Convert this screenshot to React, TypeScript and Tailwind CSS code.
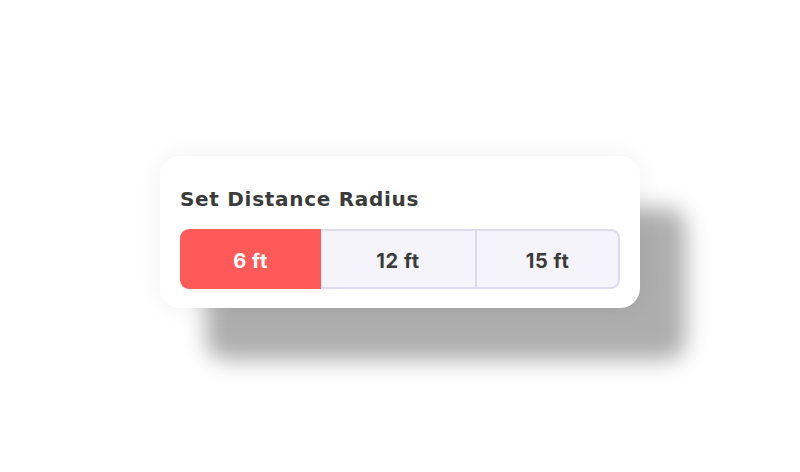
export default function App() {
  return (
    <div className="flex h-[472px] w-full items-center justify-center bg-white pb-2 font-['Inter',sans-serif]">
      {/* card */}
      <div className="w-[480px] rounded-[20px] bg-white px-5 pt-[29px] pb-[19px] shadow-[46px_52px_22px_rgba(0,0,0,0.32),0_0_24px_rgba(0,0,0,0.06)]">
        <h2 className="mb-4 font-['DejaVu_Sans',sans-serif] text-[20px] leading-7 font-bold tracking-[0.7px] text-[#3b3b3b]">
          Set Distance Radius
        </h2>
        <div className="flex h-[60px] text-[20px] font-bold tracking-[0.6px] text-[#3b3b3b]">
          <button className="flex w-[141px] items-center justify-center rounded-l-[9px] bg-[#ff5a5a] pt-[3px] text-white">
            6 ft
          </button>
          <button className="flex w-[156px] items-center justify-center border-y-2 border-r-2 border-[#dcdcee] bg-[#f4f4fa] pt-[3px]">
            12 ft
          </button>
          <button className="flex flex-1 items-center justify-center rounded-r-[9px] border-y-2 border-r-2 border-[#dcdcee] bg-[#f4f4fa] pt-[3px]">
            15 ft
          </button>
        </div>
      </div>
    </div>
  );
}
